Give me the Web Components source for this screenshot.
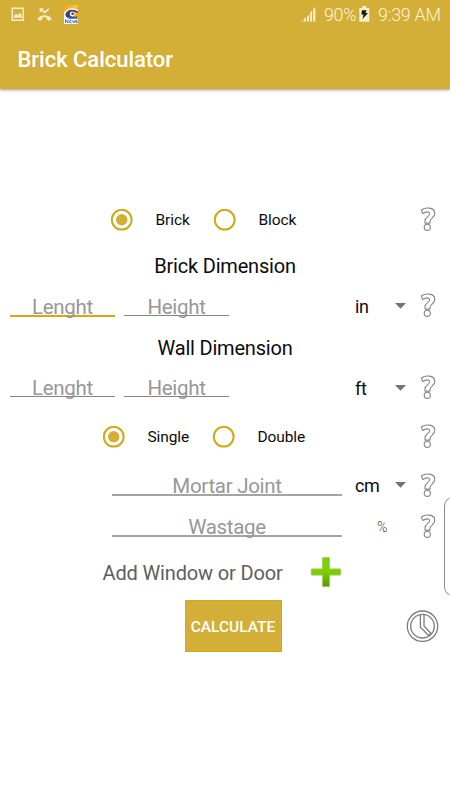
<!DOCTYPE html>
<html lang="en">
<head>
<meta charset="utf-8">
<title>Brick Calculator</title>
<style>
html, body { margin: 0; height: 100%; overflow: hidden; background: #fff; }
body { font-family: Roboto, "Liberation Sans", sans-serif; color: #0b0b0b; }
</style>
</head>
<body>
<brick-app></brick-app>
<script>
const define = (name, html) => {
  const tpl = document.createElement('template');
  tpl.innerHTML = html;
  customElements.define(name, class extends HTMLElement {
    connectedCallback() {
      if (this.shadowRoot) return;
      this.attachShadow({ mode: 'open' }).append(tpl.content.cloneNode(true));
    }
  });
};

define('status-bar', `
<style>
:host { display: flex; align-items: center; height: 29px; box-sizing: border-box; padding-left: 11px; color: #faf3d8; font-size: 18px; font-weight: 300; }
svg { display: block; flex: none; }
span { white-space: nowrap; line-height: 29px; }
.gap { flex: 1; }
.pct { width: 32px; margin-left: 8px; letter-spacing: -.4px; }
.time { width: 63px; margin: 0 9px 0 8px; letter-spacing: -.3px; }
</style>
<svg width="14" height="15" viewBox="0 0 14 15"><path fill="none" stroke="#f6edcb" stroke-width="1.5" d="M1.3 1.3h11v12h-11z"/><path fill="#f6edcb" d="M3 10.8V9l2-2.5 1.6 1.8L9 5.700l2 3.300v1.800z"/></svg>
<svg style="margin-left:12px" width="15" height="14" viewBox="0 0 15 14"><path fill="none" stroke="#f6edcb" stroke-width="1.600" d="M3.800 1l3.700 3.600L11.800.8M3.400 4V1h3"/><path fill="#f6edcb" d="M.3 10.500C4 6 11 6 14.700 10.500l-2.300 2.500-2.700-1.500V9.600c-1.500-.5-3-.5-4.400 0v1.900L2.600 13z"/></svg>
<svg style="margin:-1px 0 0 12px" width="14" height="19" viewBox="0 0 14 19">
<defs><linearGradient id="g" x2="1" y2="1"><stop stop-color="#f5a51c"/><stop offset=".5" stop-color="#f8c640"/><stop offset="1" stop-color="#ef7f17"/></linearGradient></defs>
<path fill="url(#g)" d="M0 0h14v19H0z"/><path fill="#fff" d="M0 8C3 3 8 2 14 5v1C8 4 4 6 2 10c0 2 3 4 6 4H14v5H0z"/><path fill="#4a3b86" d="M1.300 10c.7-5 6.500-7 12.700-3.500V8C9 6 6.500 7 6 9c0 2 2 3 7 2.500v1.700C7 14.500 2 13.500 1.300 10z"/><path fill="#2f9fd0" d="M2 11c1.500 1.500 5 2.600 11 1.500v1.200C7 14.700 3 13.700 2 11z"/><circle cx="8.200" cy="9" r="2.400" fill="#fff"/><circle cx="8.600" cy="8.800" r="1.300" fill="#263d7b"/>
<path fill="none" stroke="#4566a0" stroke-width=".9" d="M1.500 18v-3.500l2.500 3.500v-3.500M7.500 15.400H5.800v2.300h1.900M8.700 15.400l.7 2.200.7-1.800.7 1.800.7-2.200M13.400 15.400h-1.200v1h1v1.300h-1.300"/></svg>
<i class="gap"></i>
<svg width="15" height="15" viewBox="0 0 15 15"><path fill="#f6edcb" d="M0 14.500L2.200 12.600V14.500zM3 12l2-1.700v4.200H3zM6 9.400l2-1.700v6.800H6zM9 5.800l2-2.400v11.100H9zM12 2.300l2.400-2.300v14.500H12z"/></svg>
<span class="pct">90%</span>
<svg style="margin:-2px 0 0 3px" width="11" height="16" viewBox="0 0 11 16"><path fill="#f6edcb" d="M3.300 0h4v2H10.300v13.800H.3V2h3z"/><path fill="#17170c" d="M3 4.200h4.500L6.500 7H9L3.500 13l1-4.500H2.300z"/></svg>
<span class="time">9:39 AM</span>
`);

define('title-bar', `
<style>
:host { display: flex; align-items: center; height: 60px; padding-left: 17.500px; color: #fff; font-size: 22px; font-weight: 500; line-height: 61px; letter-spacing: -.03px; }
</style><slot></slot>`);

define('radio-option', `
<style>
:host { display: flex; align-items: center; font-size: 15.5px; line-height: 22px; white-space: nowrap; letter-spacing: -.1px; }
svg { display: block; flex: none; margin-right: var(--gap, 23px); }
.dot { display: none; }
:host([checked]) .dot { display: inline; }
</style>
<svg width="22" height="22" viewBox="0 0 22 22"><circle cx="10.700" cy="10.700" r="9.900" fill="none" stroke="#d2a817" stroke-width="2"/><circle class="dot" cx="10.700" cy="10.700" r="5.700" fill="#d3ae37"/></svg><slot></slot>`);

define('section-title', `
<style>:host { display: flex; align-items: center; justify-content: center; height: 52px; font-size: 20px; line-height: 52px; white-space: nowrap; letter-spacing: -.2px; }</style><slot></slot>`);

define('hint-field', `
<style>
:host { display: block; align-self: flex-start; box-sizing: border-box; width: 105px; height: 24px; border-bottom: 1px solid #858585; color: #979797; font-size: 20.500px; line-height: 30px; text-align: center; white-space: nowrap; letter-spacing: -.3px; }
:host([focused]) { height: 25px; border-bottom: 2px solid #d6a90f; }
:host([wide]) { width: 230px; height: 26px; border-bottom: 2px solid #a4a4a4; line-height: 33px; }
</style><slot></slot>`);

define('unit-select', `
<style>
:host { display: flex; align-items: center; width: 51px; font-size: 18px; line-height: 28px; justify-content: space-between; letter-spacing: -.3px; }
svg { display: block; margin-top: -2px; }
</style><slot></slot><svg width="11" height="6" viewBox="0 0 11 6"><path fill="#737373" d="M0 0h11L5.500 5.800z"/></svg>`);

define('help-icon', `
<style>:host { display: block; margin: -2px 14px 0 auto; } svg { display: block; }</style>
<svg width="16" height="25" viewBox="0 0 16 25" fill="none" stroke="#858585" stroke-width="1.100" stroke-linejoin="round"><path d="M1.300 3C4.800.4 14.600-.4 14.800 6.200c.1 4.300-4.600 5.200-4.800 8.200v1.700H5v-2.200c0-3.900 4.600-4.400 4.600-7.200 0-2.500-3.800-2.200-6.800-.2z"/><circle cx="7.300" cy="20.300" r="3.100"/></svg>`);

define('form-row', `
<style>:host { display: flex; align-items: center; box-sizing: border-box; height: var(--h); padding-left: var(--x, 0); }</style><slot></slot>`);

define('plus-icon', `
<style>:host { display: block; margin-top: -2px; } svg { display: block; }</style>
<svg width="32" height="32" viewBox="0 0 32 32"><defs><linearGradient id="p" x2="0" y2="1"><stop stop-color="#80cf08"/><stop offset=".5" stop-color="#7dce00"/><stop offset="1" stop-color="#57970a"/></linearGradient></defs><path d="M13 1.500h6q.6 0 .6.600v10.800h10.600q.6 0 .6.600v5q0 .6-.6.600H19.600v10.800q0 .8-.8.800h-5.600q-.8 0-.8-.8V19.100H1.800q-.6 0-.6-.6v-5q0-.6.6-.6h10.600V2.100q0-.6.600-.6z" fill="url(#p)" stroke="#a6cf67" stroke-width="1"/></svg>`);

define('calc-button', `
<style>
:host { display: block; }
button { all: unset; display: block; box-sizing: border-box; width: 97px; height: 52px; border: 1px solid #d1a91b; background: #d3af37; color: #fff; font-size: 15.500px; font-weight: 500; line-height: 52px; text-align: center; white-space: nowrap; }
</style><button><slot></slot></button>`);

define('clock-icon', `
<style>:host { display: block; margin-left: auto; margin-right: 11px; } svg { display: block; }</style>
<svg width="33" height="33" viewBox="0 0 33 33" fill="none" stroke="#7d7d7d" stroke-width="1.300"><circle cx="16.500" cy="16.200" r="15.200"/><circle cx="16.500" cy="16.200" r="11.800"/><path d="M14.400 5v12.200l8.300 8.300 2.200-2.200L18 15.900V5"/></svg>`);

define('edge-handle', `
<style>:host { display: block; position: absolute; left: 444px; top: 497px; width: 20px; height: 99px; box-sizing: border-box; border: 1px solid #8b8b8b; border-radius: 9px; background: #fff; }</style>`);

define('brick-app', `
<style>
:host { display: block; position: relative; width: 450px; height: 800px; overflow: hidden; background: #fff; }
header { background: #d3af37; height: 89px; box-shadow: 0 1px 3px rgba(0,0,0,.4); }
main { padding-top: 111px; }
.add { width: 207px; font-size: 20px; color: #5e5e5e; white-space: nowrap; line-height: 30px; letter-spacing: -.15px; }
.pc { margin-left: 35px; font-size: 14px; color: #444; font-weight: 300; }
</style>
<header><status-bar></status-bar><title-bar>Brick Calculator</title-bar></header>
<main>
<form-row style="--h:40px;--x:110.500px"><radio-option checked style="width:103px">Brick</radio-option><radio-option>Block</radio-option><help-icon></help-icon></form-row>
<section-title>Brick Dimension</section-title>
<form-row style="--h:30px;--x:10px"><hint-field focused>Lenght</hint-field><hint-field style="margin-left:9px">Height</hint-field><unit-select style="margin-left:126px">in</unit-select><help-icon style="margin-top:-4px"></help-icon></form-row>
<section-title>Wall Dimension</section-title>
<form-row style="--h:30px;--x:10px"><hint-field style="height:23px;line-height:28px">Lenght</hint-field><hint-field style="margin-left:9px;height:23px;line-height:28px">Height</hint-field><unit-select style="margin-left:126px">ft</unit-select><help-icon style="margin-top:-4px"></help-icon></form-row>
<form-row style="--h:66px;--x:102.500px"><radio-option checked style="width:110px">Single</radio-option><radio-option>Double</radio-option><help-icon></help-icon></form-row>
<form-row style="--h:31px;--x:112px"><hint-field wide>Mortar Joint</hint-field><unit-select style="margin-left:13px">cm</unit-select><help-icon style="margin-top:0"></help-icon></form-row>
<form-row style="--h:51px;--x:112px"><hint-field wide style="margin-top:10px">Wastage</hint-field><span class="pc">%</span><help-icon style="margin-top:0"></help-icon></form-row>
<form-row style="--h:42px;--x:102.500px"><span class="add">Add Window or Door</span><plus-icon></plus-icon></form-row>
<form-row style="--h:64px;--x:184.500px"><calc-button>CALCULATE</calc-button><clock-icon></clock-icon></form-row>
</main>
<edge-handle></edge-handle>
`);
</script>
</body>
</html>
